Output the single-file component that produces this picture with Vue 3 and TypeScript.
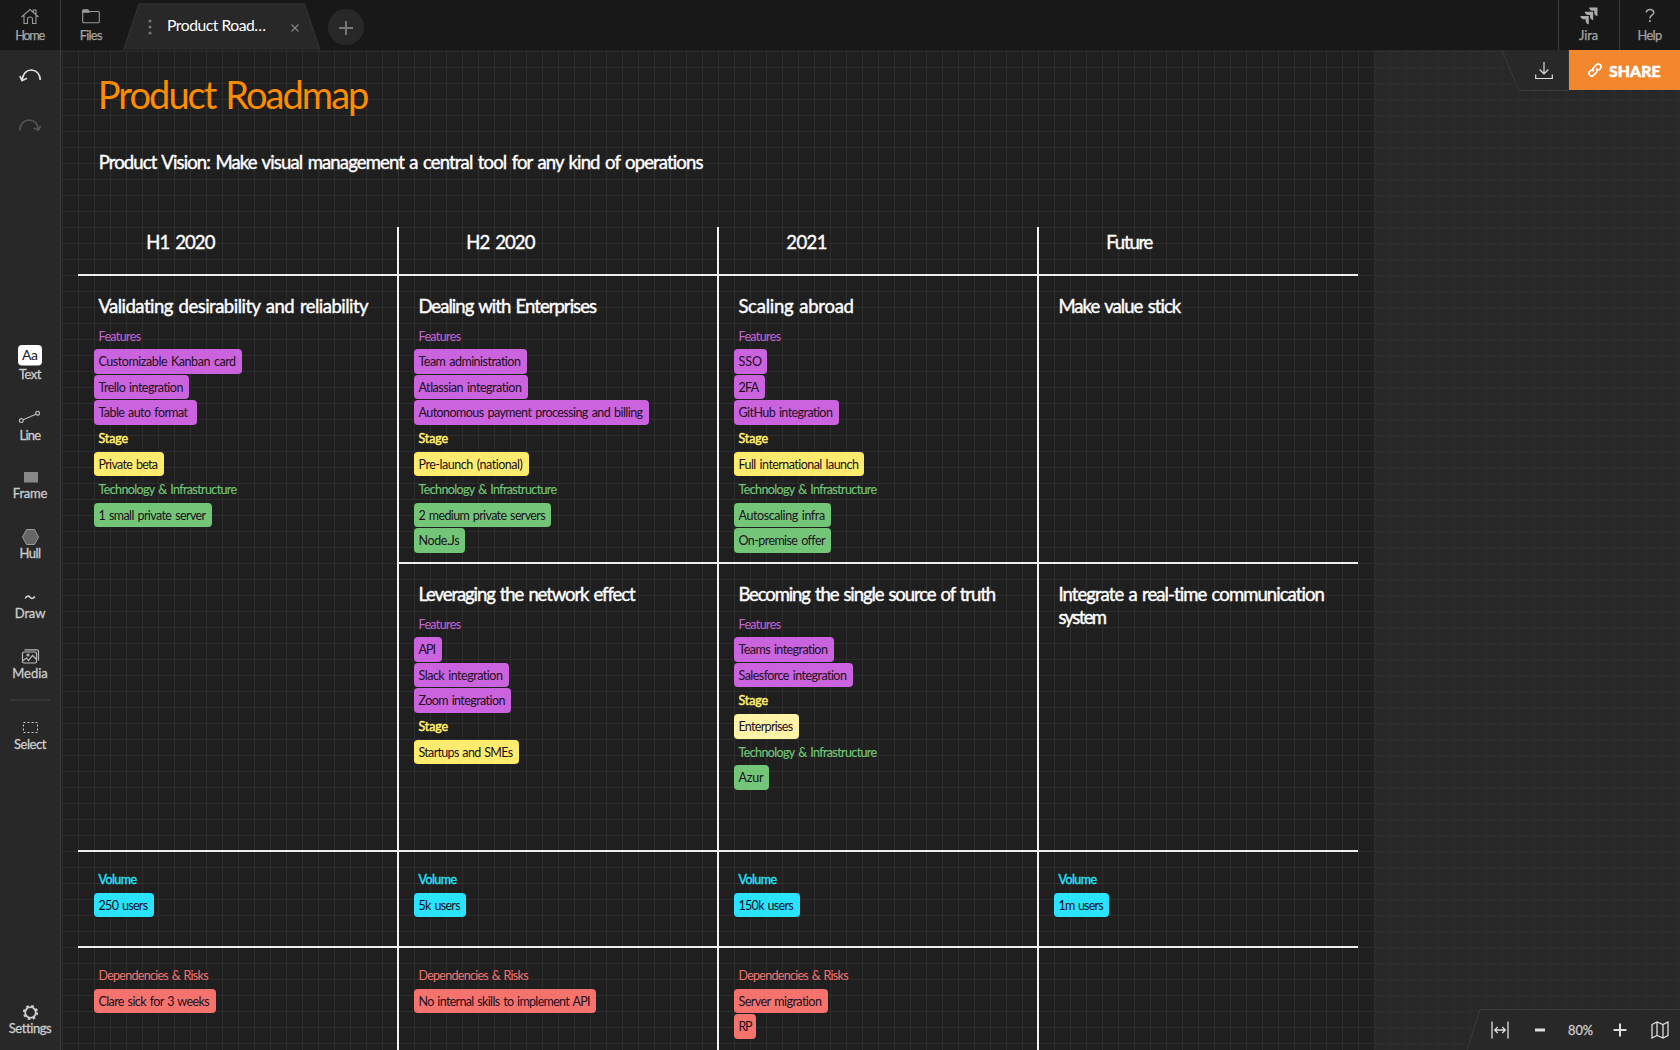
<script setup lang="ts">
import type { Directive } from 'vue'

type Kind = 'purple' | 'yellow' | 'pale' | 'green' | 'cyan' | 'red'
interface Item { text: string; w: number; kind: Kind; label?: boolean; pad?: number }
interface Cell { lines: { text: string; w: number }[]; items: Item[]; area: string }

/* Tracks the text so that it fills the given width. */
const vFit: Directive<HTMLElement, number> = {
  mounted(el, binding) {
    const range = document.createRange()
    range.selectNodeContents(el)
    const natural = range.getBoundingClientRect().width
    const count = (el.textContent ?? '').length - 1
    if (count > 0) el.style.letterSpacing = `${(binding.value + 0.6 - natural) / count}px`
  },
}

const label = (text: string, w: number, kind: Kind): Item => ({ text, w, kind, label: true })
const chip = (text: string, w: number, kind: Kind, pad = 11): Item => ({ text, w, kind, pad })
const features = label('Features', 42, 'purple')
const stage = label('Stage', 29, 'yellow')
const tech = label('Technology & Infrastructure', 138, 'green')
const volume = label('Volume', 38, 'cyan')
const risks = label('Dependencies & Risks', 109.5, 'red')

const periods = [
  { text: 'H1 2020', w: 68.5 },
  { text: 'H2 2020', w: 68.5 },
  { text: '2021', w: 40.5 },
  { text: 'Future', w: 46.5 },
]

const cells: Cell[] = [
  {
    area: 'a1', lines: [{ text: 'Validating desirability and reliability', w: 270 }],
    items: [features, chip('Customizable Kanban card', 137, 'purple'), chip('Trello integration', 84.5, 'purple', 10.5),
      chip('Table auto format', 89, 'purple', 14), stage, chip('Private beta', 59, 'yellow', 10.5), tech,
      chip('1 small private server', 107, 'green')],
  },
  {
    area: 'a2', lines: [{ text: 'Dealing with Enterprises', w: 178 }],
    items: [features, chip('Team administration', 102, 'purple', 10.5), chip('Atlassian integration', 103, 'purple'),
      chip('Autonomous payment processing and billing', 224, 'purple'), stage,
      chip('Pre-launch (national)', 104, 'yellow'), tech, chip('2 medium private servers', 126.5, 'green', 10.3),
      chip('Node.Js', 40.5, 'green', 10.3)],
  },
  {
    area: 'a3', lines: [{ text: 'Scaling abroad', w: 115 }],
    items: [features, chip('SSO', 23, 'purple', 10.3), chip('2FA', 20, 'purple'), chip('GitHub integration', 94, 'purple', 10.5), stage,
      chip('Full international launch', 120, 'yellow', 10.3), tech, chip('Autoscaling infra', 86, 'green', 10.5),
      chip('On-premise offer', 86, 'green', 10.5)],
  },
  { area: 'a4', lines: [{ text: 'Make value stick', w: 122.5 }], items: [] },
  {
    area: 'b2', lines: [{ text: 'Leveraging the network effect', w: 216 }],
    items: [features, chip('API', 17, 'purple'), chip('Slack integration', 84, 'purple'), chip('Zoom integration', 86.5, 'purple', 10.5),
      stage, chip('Startups and SMEs', 94, 'yellow', 10.7)],
  },
  {
    area: 'b3', lines: [{ text: 'Becoming the single source of truth', w: 257 }],
    items: [features, chip('Teams integration', 89, 'purple'), chip('Salesforce integration', 108, 'purple'), stage,
      chip('Enterprises', 54, 'pale', 10.7), tech, chip('Azur', 24.5, 'green', 10.5)],
  },
  { area: 'b4', lines: [{ text: 'Integrate a real-time communication', w: 266.5 }, { text: 'system', w: 48 }], items: [] },
  { area: 'c1', lines: [], items: [volume, chip('250 users', 49, 'cyan', 10.7)] },
  { area: 'c2', lines: [], items: [volume, chip('5k users', 41.5, 'cyan', 10.3)] },
  { area: 'c3', lines: [], items: [volume, chip('150k users', 54.5, 'cyan')] },
  { area: 'c4', lines: [], items: [volume, chip('1m users', 44.5, 'cyan', 10.5)] },
  { area: 'd1', lines: [], items: [risks, chip('Clare sick for 3 weeks', 110.5, 'red')] },
  { area: 'd2', lines: [], items: [risks, chip('No internal skills to implement API', 171.5, 'red', 10.7)] },
  { area: 'd3', lines: [], items: [risks, chip('Server migration', 83, 'red'), chip('RP', 13.5, 'red', 8.5)] },
  { area: 'd4', lines: [], items: [] },
]

const tools = [
  { name: 'Text', w: 22 },
  { name: 'Line', w: 21 },
  { name: 'Frame', w: 34 },
  { name: 'Hull', w: 21 },
  { name: 'Draw', w: 30 },
  { name: 'Media', w: 35 },
  { name: 'Select', w: 32 },
  { name: 'Settings', w: 42 },
]
</script>

<template>
  <div class="app">
    <header class="topbar">
      <button class="top-btn home">
        <svg width="20" height="18" viewBox="0 0 20 18"><path d="M1.500 10 10 2.500 18.500 10M4 8.500V16.500H7.500V12Q7.500 10 10 10T12.500 12V16.500H16V3H13.300V5" /></svg>
        <span v-fit="29.500">Home</span>
      </button>
      <button class="top-btn files">
        <svg width="20" height="18" viewBox="0 0 20 18"><path d="M1.700 15V4.500H17.500Q18.300 4.500 18.300 5.500V14.800Q18.300 15.800 17.500 15.800H2.500Q1.700 15.800 1.700 15Z" /><path class="flap" d="M1.700 5.200V3.600Q1.700 2.700 2.700 2.700H7L8 5.200Z" /></svg>
        <span v-fit="22">Files</span>
      </button>
      <div class="tab">
        <svg class="tab-bg" width="198" height="47" viewBox="0 0 198 47"><path d="M.5 47 16 1H181.500L197 47" /></svg>
        <svg class="dots" width="4" height="16" viewBox="0 0 4 16"><circle cx="2" cy="2" r="1.500" /><circle cx="2" cy="8" r="1.500" /><circle cx="2" cy="14" r="1.500" /></svg>
        <span class="tab-name" v-fit="98.500">Product Road…</span>
        <svg class="close" width="8" height="8" viewBox="0 0 8 8"><path d="M.5.5 7.500 7.500M7.500.5.5 7.500" /></svg>
      </div>
      <button class="add"><svg width="16" height="16" viewBox="0 0 16 16"><path d="M8 1V15M1 8H15" /></svg></button>
      <div class="grow"></div>
      <button class="top-btn bordered">
        <svg class="jira" width="20" height="18" viewBox="0 0 20 18"><path d="M10 .5H18.500V9Q15.500 8.500 15.300 6V3.800H13.200Q10.500 3.500 10 .5ZM5.700 4.700H14.200V13.200Q11.300 12.700 11 10.200V8H9Q6.200 7.700 5.700 4.700ZM1.300 8.900H9.800V17.400Q7 17 6.700 14.500V12.200H4.600Q1.800 11.900 1.300 8.900Z" /></svg>
        <span v-fit="18.500">Jira</span>
      </button>
      <button class="top-btn bordered">
        <svg width="20" height="18" viewBox="0 0 20 18"><path class="q" d="M6.300 5.500Q6.600 2.500 10 2.500T13.800 5.400Q13.800 7 11.900 8.200T9.900 11.500" /><circle class="qd" cx="9.900" cy="14" r="1.100" /></svg>
        <span v-fit="24">Help</span>
      </button>
    </header>

    <div class="body">
      <aside class="sidebar">
        <svg class="hist" width="60" height="40" viewBox="0 0 60 40"><path d="M22 25.500Q23.500 15 31.500 15 39.500 15.500 40.300 25M19.800 21 22 25.700 27 23.300" /></svg>
        <svg class="hist off" width="60" height="40" viewBox="0 0 60 40"><path d="M38.500 25Q37 15 29 15 20.500 15.500 19.700 25.500M40.500 21 38.500 25 33.500 23" /></svg>
        <div v-for="t in tools" :key="t.name" class="tool" :class="t.name.toLowerCase()">
          <svg width="60" height="24" viewBox="0 0 60 24">
            <template v-if="t.name === 'Text'">
              <rect x="18" y="3" width="24" height="20.500" rx="4" fill="#fff" />
              <text x="22" y="18" class="aa" textLength="16">Aa</text>
            </template>
            <g v-else-if="t.name === 'Line'" class="ln"><path d="M23.200 16.800 35.700 11.200" /><circle cx="21.300" cy="17.600" r="1.900" /><circle cx="37.600" cy="10.200" r="1.900" /></g>
            <rect v-else-if="t.name === 'Frame'" x="24" y="11" width="14" height="10.500" fill="#888" />
            <path v-else-if="t.name === 'Hull'" d="M26.500 8.500H34.500L38.500 16 34.500 23.500H26.500L22.500 16Z" fill="#666" stroke="#999" />
            <path v-else-if="t.name === 'Draw'" d="M25.200 17.500Q27.500 13.500 30 16.200T34.800 15.500" fill="none" stroke="#ddd" stroke-width="1.500" />
            <g v-else-if="t.name === 'Media'" class="md"><rect x="22.500" y="11" width="14" height="11" rx="1.500" /><path d="M24.500 8.900H37Q38.500 8.900 38.500 10.500V19.500M23 19.500 26.500 17 28.500 19.500 32.500 14.500 36 18" /><circle cx="28" cy="14" r="1" /></g>
            <rect v-else-if="t.name === 'Select'" x="23.500" y="10.500" width="14" height="10" fill="none" stroke="#ccc" stroke-dasharray="2 2" />
            <g v-else class="gear"><circle class="teeth" cx="30.500" cy="16.500" r="6.500" /><circle cx="30.500" cy="16.500" r="5.300" /></g>
          </svg>
          <span v-fit="t.w">{{ t.name }}</span>
        </div>
      </aside>

      <main class="canvas">
        <div class="paper">
          <h1><span v-fit="271">Product Roadmap</span></h1>
          <p class="vision"><span v-fit="604.500">Product Vision: Make visual management a central tool for any kind of operations</span></p>
          <section class="board">
            <div v-for="p in periods" :key="p.text" class="period"><span v-fit="p.w">{{ p.text }}</span></div>
            <div v-for="c in cells" :key="c.area" class="cell" :class="c.area">
              <h2 v-if="c.lines.length">
                <span v-for="l in c.lines" :key="l.text" v-fit="l.w">{{ l.text }}</span>
              </h2>
              <div
                v-for="it in c.items"
                :key="it.text"
                :class="[it.label ? 'label' : 'chip', it.kind]"
                :style="it.label ? undefined : { width: it.w + (it.pad ?? 11) + 'px' }"
              ><span v-fit="it.w">{{ it.text }}</span></div>
            </div>
          </section>
        </div>

        <div class="share-bar">
          <svg class="bar-bg" width="68" height="41" viewBox="0 0 68 41"><path d="M1 0 17 38Q18 40.500 20 40.500H68V0" /></svg>
          <svg class="dl" width="18" height="18" viewBox="0 0 18 18"><path d="M9 0V11.500M4.700 7.500 9 11.800 13.300 7.500M.7 12.500V16.500H17.300V12.500" /></svg>
          <button class="share">
            <svg width="16" height="16" viewBox="0 0 16 16"><path d="M6.800 9.500Q4.800 7.500 6.700 5.500L9.300 2.800Q11.300 1 13.200 2.700 15 4.700 13.200 6.700L11.500 8.400M9.200 6.500Q11.200 8.500 9.300 10.500L6.700 13.200Q4.700 15 2.800 13.300 1 11.300 2.800 9.300L4.500 7.600" /></svg>
            <span v-fit="51">SHARE</span>
          </button>
        </div>

        <div class="zoom-bar">
          <svg class="bar-bg" width="213" height="41" viewBox="0 0 213 41"><path d="M0 41 13 .5H214V42" /></svg>
          <svg class="z1" width="18" height="18" viewBox="0 0 18 18"><path d="M1 .5V17.500M17 .5V17.500M3.700 9H14.300M6.700 6 3.700 9 6.700 12M11.300 6 14.300 9 11.300 12" /></svg>
          <svg class="z2" width="10" height="14" viewBox="0 0 10 14"><path d="M0 7H10" /></svg>
          <span class="pct" v-fit="24.500">80%</span>
          <svg class="z3" width="14" height="14" viewBox="0 0 14 14"><path d="M7 .5V13.500M.5 7H13.500" /></svg>
          <svg class="z4" width="18" height="18" viewBox="0 0 18 18"><path d="M1 3.500 6 1 12 3.500 17 1V14.500L12 17 6 14.500 1 17ZM6 1V14.500M12 3.500V17" /></svg>
        </div>
      </main>
    </div>
  </div>
</template>

<style>
body { margin: 0; background: #282828; overflow: hidden; }
</style>

<style scoped>
.app { width: 1680px; height: 1050px; display: flex; flex-direction: column; overflow: hidden; background: #282828; font-family: Lato, "Open Sans", sans-serif; color: #fff; }
.app * { box-sizing: border-box; }
span { white-space: nowrap; }
svg { flex: none; fill: none; display: block; }
button { border: 0; background: none; padding: 0; font: inherit; color: inherit; }
.topbar { height: 50px; flex: none; display: flex; background: #181818; }
.top-btn { width: 61px; display: flex; flex-direction: column; align-items: center; padding: 7px 1px 0 0; font-size: 12.800px; line-height: 16px; color: #a5a5a5; -webkit-text-stroke: .25px #a5a5a5; }
.top-btn svg { stroke: #999; stroke-width: 1.100; margin-bottom: 2px; }
.top-btn svg.jira { fill: #aaa; stroke: none; }
.flap { fill: #999; }
.home { border-right: 1px solid #3a3a3a; }
.files { width: 62px; padding-right: 2.500px; }
.bordered { border-left: 1px solid #3a3a3a; }
.q { stroke: #aaa; stroke-width: 1.500; }
.qd { fill: #aaa; stroke: none; }
.tab { position: relative; width: 198px; height: 50px; display: flex; align-items: center; padding: 3px 0 0 24.500px; }
.tab-bg { position: absolute; left: 0; top: 3px; fill: #282828; stroke: #363636; }
.dots { position: relative; fill: #777; }
.tab-name { position: relative; margin: -4px 0 0 15.500px; font-size: 15.700px; width: 99px; }
.close { position: relative; stroke: #888; stroke-width: 1.100; margin-left: 25px; margin-top: 2px; }
.add { width: 36px; height: 36px; border-radius: 50%; background: #282828; margin: 9px 0 0 7px; display: flex; align-items: center; justify-content: center; }
.add svg { stroke: #777; stroke-width: 2; margin-top: 1px; }
.grow { flex: 1; }
.body { flex: 1; display: flex; min-height: 0; }
.sidebar { width: 61px; flex: none; border-right: 1px solid #3c3c3c; background: #282828; display: flex; flex-direction: column; align-items: center; padding-top: 5px; }
.hist { stroke: #ddd; stroke-width: 1.700; }
.hist.off { stroke: #555; margin-top: 10px; }
.tool { width: 60px; height: 40px; flex: none; display: flex; flex-direction: column; align-items: center; font-size: 13px; line-height: 16px; color: #ccc; -webkit-text-stroke: .3px #ccc; margin-top: 20px; }
.text { margin-top: 197px; }
.line { margin-top: 21px; }
.frame { margin-top: 18px; }
.select { position: relative; margin-top: 31px; }
.select::before { content: ""; position: absolute; left: 10px; width: 40px; top: -13px; height: 2px; background: #353535; }
.settings { margin-top: 244px; }
.aa { font-size: 14px; fill: #222; stroke: none; -webkit-text-stroke: 0; }
.ln { stroke: #bbb; stroke-width: 1.200; }
.md { stroke: #bbb; stroke-width: 1.200; }
.gear { stroke: #ccc; stroke-width: 1.800; }
.teeth { stroke-width: 2.200; stroke-dasharray: 2.550 2.550; }
.canvas { position: relative; flex: 1; overflow: hidden; background: #282828; }
.canvas::after { content: ""; position: absolute; inset: 0; background-image: linear-gradient(90deg, #2e2e2e 1px, transparent 1px), linear-gradient(#2e2e2e 1px, transparent 1px); background-size: 16px 16px; background-position: 1px 1px; }
.paper { position: relative; z-index: 1; width: 1313px; height: 1000px; overflow: hidden; padding-left: 17px; background-color: #1f1f1f; background-image: linear-gradient(90deg, #2d2d2d 1px, transparent 1px), linear-gradient(#2d2d2d 1px, transparent 1px); background-size: 16px 16px; background-position: 1px 1px; }
h1, h2, p { margin: 0; font-weight: 400; }
h1 { padding: 21px 0 0 19.800px; height: 97px; font-size: 38px; line-height: 46px; word-spacing: 2px; color: #ff8c00; }
.vision { padding-left: 20.700px; height: 80px; font-size: 18.500px; line-height: 31px; word-spacing: 1.500px; -webkit-text-stroke: .4px #fff; }
.board { display: grid; grid-template-columns: repeat(4, 320px); grid-template-rows: 48px 288px 288px 96px 120px; }
.period { position: relative; padding-left: 68.300px; font-size: 18.500px; line-height: 30px; word-spacing: 2px; -webkit-text-stroke: .4px #fff; }
.cell { padding: 16px 0 0 16px; position: relative; }
.cell::before { content: ""; position: absolute; left: -1px; right: 0; top: -1px; height: 2px; background: #eee; }
.a1::before, .c1::before, .d1::before { left: 0; }
.period + .period::after, .cell::after { content: ""; position: absolute; left: -1px; top: 0; bottom: 0; width: 2px; background: #f2f2f2; }
.a1::after, .c1::after, .d1::after { display: none; }
.a1 { grid-row: 2 / span 2; grid-column: 1; }
.a2 { grid-row: 2; grid-column: 2; }
.a3 { grid-row: 2; grid-column: 3; }
.a4 { grid-row: 2; grid-column: 4; }
.b2 { grid-row: 3; grid-column: 2; }
.b3 { grid-row: 3; grid-column: 3; }
.b4 { grid-row: 3; grid-column: 4; }
h2 { display: flex; flex-direction: column; align-items: flex-start; padding: 3.500px 0 6.200px 4.400px; font-size: 18.500px; line-height: 23px; word-spacing: 1.500px; -webkit-text-stroke: .4px #fff; }
.label, .chip { padding-left: 4.500px; font-size: 12.500px; word-spacing: 1.200px; }
.label { height: 25.600px; line-height: 25.600px; }
.label.purple { color: #c863dc; }
.label.yellow { color: #ffec6e; -webkit-text-stroke: .5px #ffec6e; }
.label.green { color: #72c678; -webkit-text-stroke: .15px #72c678; }
.label.cyan { color: #29e3ff; -webkit-text-stroke: .35px #29e3ff; }
.label.red { color: #f5736e; }
.chip { height: 24.600px; margin-bottom: 1px; border-radius: 4px; line-height: 25px; color: #1c1020; }
.chip.purple { background: #ca63dd; }
.chip.yellow { background: #ffec6e; }
.chip.pale { background: #fff3a8; }
.chip.green { background: #73c677; }
.chip.cyan { background: #29e3ff; }
.chip.red { background: #f6736d; }
.share-bar { position: absolute; z-index: 2; right: 0; top: 0; height: 41px; width: 179px; display: flex; }
.bar-bg { position: absolute; left: 0; top: 0; fill: #282828; stroke: #3c3c3c; }
.dl { position: relative; margin: 12px 0 0 34px; stroke: #ddd; stroke-width: 1.200; }
.share { width: 111px; height: 40px; margin-left: auto; background: #f2872d; display: flex; align-items: center; padding-left: 18px; gap: 6px; font-size: 15.800px; font-weight: 900; -webkit-text-stroke: .5px #fff; }
.share svg { stroke: #fff; stroke-width: 1.800; }
.zoom-bar { position: absolute; z-index: 2; right: 0; bottom: 0; width: 213px; height: 41px; display: flex; align-items: center; padding-left: 24px; }
.zoom-bar svg { stroke: #ddd; stroke-width: 1.300; }
.zoom-bar svg.bar-bg { stroke: #3c3c3c; stroke-width: 1; }
.z1, .z2, .z3, .z4, .pct { position: relative; }
.zoom-bar .z2 { margin-left: 26px; stroke-width: 3; }
.pct { width: 25px; margin-left: 23px; font-size: 12.800px; color: #ccc; -webkit-text-stroke: .3px #ccc; }
.zoom-bar .z3 { margin-left: 20px; stroke-width: 2; }
.z4 { margin-left: 24px; }
</style>
